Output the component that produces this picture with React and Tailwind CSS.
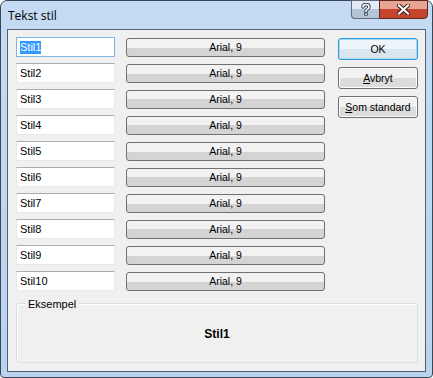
import React from 'react';

const rows = ['Stil1', 'Stil2', 'Stil3', 'Stil4', 'Stil5', 'Stil6', 'Stil7', 'Stil8', 'Stil9', 'Stil10'];

function FontButton({ label }) {
  return (
    <button className="w-[199px] h-[19px] rounded-[3px] border border-[#707070] bg-gradient-to-b from-[#f2f2f2] from-50% to-[#d4d4d4] to-50% text-[10.5px] leading-none text-black flex items-center justify-center">
      {label}
    </button>
  );
}

function SideButton({ children, primary }) {
  return (
    <button
      className={`w-[80px] h-[22px] rounded-[3px] border text-[10.5px] leading-none text-black flex items-center justify-center ${
        primary
          ? 'border-[#3399dd] shadow-[inset_0_0_0_1px_#a8dcf6] bg-gradient-to-b from-[#eef5fa] from-50% to-[#dae5ee] to-50%'
          : 'border-[#707070] shadow-[inset_0_0_0_1px_#fcfcfc] bg-gradient-to-b from-[#f2f2f2] from-50% to-[#dcdcdc] to-50%'
      }`}
    >
      {children}
    </button>
  );
}

export default function App() {
  return (
    <div
      className="w-[433px] h-[378px] rounded-t-[7px] rounded-b-[4px] border border-[#3a4756] bg-gradient-to-b from-[#c4dbf3] to-[#b9d2ee] flex flex-col px-[6px] pb-[5px]"
      style={{ fontFamily: '"Liberation Sans", Arial, sans-serif' }}
    >
      {/* title bar */}
      <div className="h-[28px] flex items-start justify-between">
        <span
          className="mt-[6px] ml-[1px] text-[12px] text-black"
          style={{ fontFamily: '"Open Sans", "Noto Sans", sans-serif' }}
        >
          Tekst stil
        </span>
        <div className="flex -mt-px -mr-[2px]">
          <div className="w-[28px] h-[19px] rounded-bl-[4px] border border-[#5d6d7f] border-r-0 bg-gradient-to-b from-[#e3ebf4] from-45% to-[#b3c4d7] to-45% flex items-center justify-center">
            <svg width="10" height="13" viewBox="0 0 10 13">
              <path d="M2 4 Q2 1.5 5 1.5 Q8 1.5 8 4 Q8 5.5 6 6.5 Q5 7 5 8.5" fill="none" stroke="#2b3a4a" strokeWidth="3.4" strokeLinecap="round" />
              <rect x="3.3" y="9.6" width="3.4" height="3" fill="#2b3a4a" />
              <path d="M2 4 Q2 1.5 5 1.5 Q8 1.5 8 4 Q8 5.5 6 6.5 Q5 7 5 8.5" fill="none" stroke="#ffffff" strokeWidth="1.6" strokeLinecap="round" />
              <rect x="4.2" y="10.4" width="1.6" height="1.5" fill="#ffffff" />
            </svg>
          </div>
          <div className="w-[49px] h-[19px] rounded-br-[4px] border border-[#5a2a22] bg-gradient-to-b from-[#e8a596] from-45% to-[#c7452d] to-45% flex items-center justify-center">
            <svg width="13" height="11" viewBox="0 0 13 11">
              <path d="M2 1.5 L11 9.5 M11 1.5 L2 9.5" stroke="#3a1410" strokeWidth="4" strokeLinecap="square" />
              <path d="M2 1.5 L11 9.5 M11 1.5 L2 9.5" stroke="#ffffff" strokeWidth="2.2" strokeLinecap="square" />
            </svg>
          </div>
        </div>
      </div>

      {/* client area */}
      <div className="flex-1 border border-[#55616f] bg-[#f0f0f0] pt-[7px] pl-[8px] pr-[7px] flex flex-col">
        <div className="flex">
          <div className="flex flex-col gap-[6px]">
            {rows.map((name, i) => (
              <div key={name} className="flex items-start gap-[11px]">
                <div
                  className={`w-[99px] h-[20px] border bg-white flex items-center pl-[3px] text-[11px] text-black ${
                    i === 0 ? 'border-[#7eb4ea]' : 'border-[#e3e9ef] border-t-[#abadb3]'
                  }`}
                >
                  {i === 0 ? <span className="bg-[#3399ff] text-white leading-[13px]">{name}</span> : name}
                </div>
                <div className="pt-px">
                  <FontButton label="Arial, 9" />
                </div>
              </div>
            ))}
          </div>
          <div className="ml-auto flex flex-col gap-[7px] pt-px">
            <SideButton primary>OK</SideButton>
            <SideButton>
              <span><span className="underline">A</span>vbryt</span>
            </SideButton>
            <SideButton>
              <span><span className="underline">S</span>om standard</span>
            </SideButton>
          </div>
        </div>

        {/* preview group */}
        <div className="relative mt-[12px] w-[402px] h-[60px] rounded-[3px] border border-[#d5dfe5] shadow-[inset_1px_1px_0_#ffffff] flex items-center justify-center">
          <span className="absolute -top-[8px] left-[8px] px-[3px] bg-[#f0f0f0] text-[11px] text-black">Eksempel</span>
          <span className="mt-[2px] text-[12px] font-bold text-black">Stil1</span>
        </div>
      </div>
    </div>
  );
}
